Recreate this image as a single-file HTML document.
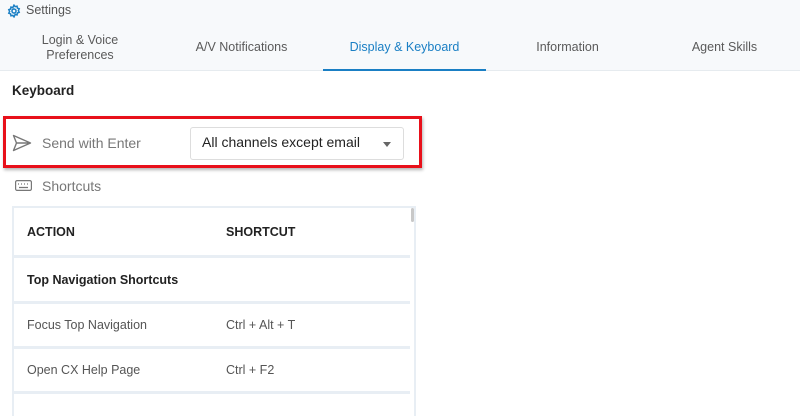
<!DOCTYPE html>
<html><head><meta charset="utf-8"><style>
*{box-sizing:border-box;margin:0;padding:0}
body{width:800px;height:405px;overflow:hidden;background:#fff;font-family:"Liberation Sans",sans-serif;position:relative;color:#333}
.hdr{position:absolute;left:0;top:0;width:800px;height:71px;background:#f7f9fb;border-bottom:1px solid #e6ebef}
.abs{position:absolute;white-space:nowrap}
.tab{position:absolute;top:28px;height:39px;display:flex;align-items:center;justify-content:center;font-size:12.5px;color:#5a5a5a;text-align:center;line-height:15px}
.row{position:absolute;left:13px;width:397px;border-bottom:3px solid #e8eef4;font-size:12.5px;display:flex;align-items:center}
.row span{position:absolute}
</style></head><body>
<div class="hdr"></div>
<svg class="abs" style="left:7px;top:4px" width="14" height="14" viewBox="0 0 24 24" fill="none" stroke="#1a7fc4" stroke-width="2.6"><circle cx="12" cy="12" r="3.5"/><path d="M12 2l2 2.6 3.2-.9.6 3.3 3.1 1.2-1.4 3 1.4 3-3.1 1.2-.6 3.3-3.2-.9L12 22l-2-2.6-3.2.9-.6-3.3-3.1-1.2 1.4-3-1.4-3 3.1-1.2.6-3.3 3.2.9z"/></svg>
<div class="abs" style="left:26px;top:3px;font-size:12.5px;color:#555">Settings</div>
<div class="tab" style="left:0;width:160px">Login &amp; Voice<br>Preferences</div>
<div class="tab" style="left:160px;width:163px">A/V Notifications</div>
<div class="tab" style="left:323px;width:163px;color:#1a7fc4">Display &amp; Keyboard</div>
<div class="abs" style="left:323px;top:69px;width:163px;height:2px;background:#1a7fc4"></div>
<div class="tab" style="left:486px;width:163px">Information</div>
<div class="tab" style="left:649px;width:151px">Agent Skills</div>
<div class="abs" style="left:12px;top:83px;font-size:13.5px;color:#222;font-weight:bold">Keyboard</div>
<div class="abs" style="left:3px;top:116px;width:419px;height:52px;border:3px solid #e8101a;box-shadow:1px 2px 3px rgba(0,0,0,.3)"></div>
<svg class="abs" style="left:12px;top:134px" width="20" height="18" viewBox="0 0 20 18" fill="none" stroke="#777" stroke-width="1.4" stroke-linejoin="round"><path d="M1.5 1.5L18.5 9 1.5 16.5 4.5 9z M4.5 9H18.5"/></svg>
<div class="abs" style="left:42px;top:135px;font-size:14px;color:#777">Send with Enter</div>
<div class="abs" style="left:190px;top:127px;width:214px;height:33px;border:1px solid #ddd;border-radius:3px;background:#fff"></div>
<div class="abs" style="left:202px;top:134px;font-size:14px;color:#222">All channels except email</div>
<div class="abs" style="left:383px;top:142px;width:0;height:0;border-left:4px solid transparent;border-right:4px solid transparent;border-top:5px solid #666"></div>
<svg class="abs" style="left:15px;top:180px" width="17" height="11" viewBox="0 0 17 11" fill="none" stroke="#777" stroke-width="1.2"><rect x="0.6" y="0.6" width="15.8" height="9.8" rx="1.5"/><path d="M3 4h1M6 4h1M9 4h1M12 4h1M4 7.5h9"/></svg>
<div class="abs" style="left:42px;top:178px;font-size:14px;color:#777">Shortcuts</div>
<div class="abs" style="left:12px;top:206px;width:404px;height:210px;border:2px solid #e8eef4;border-bottom:none"></div>
<div class="abs" style="left:411px;top:208px;width:3px;height:14px;background:#c8c8c8;border-radius:2px"></div>
<div class="row" style="top:208px;height:50px"><span style="left:14px;font-weight:bold;color:#222">ACTION</span><span style="left:213px;font-weight:bold;color:#222">SHORTCUT</span></div>
<div class="row" style="top:258px;height:46px"><span style="left:14px;font-weight:bold;color:#222">Top Navigation Shortcuts</span></div>
<div class="row" style="top:304px;height:45px"><span style="left:14px;color:#555">Focus Top Navigation</span><span style="left:213px;color:#555">Ctrl + Alt + T</span></div>
<div class="row" style="top:349px;height:45px"><span style="left:14px;color:#555">Open CX Help Page</span><span style="left:213px;color:#555">Ctrl + F2</span></div>
</body></html>
